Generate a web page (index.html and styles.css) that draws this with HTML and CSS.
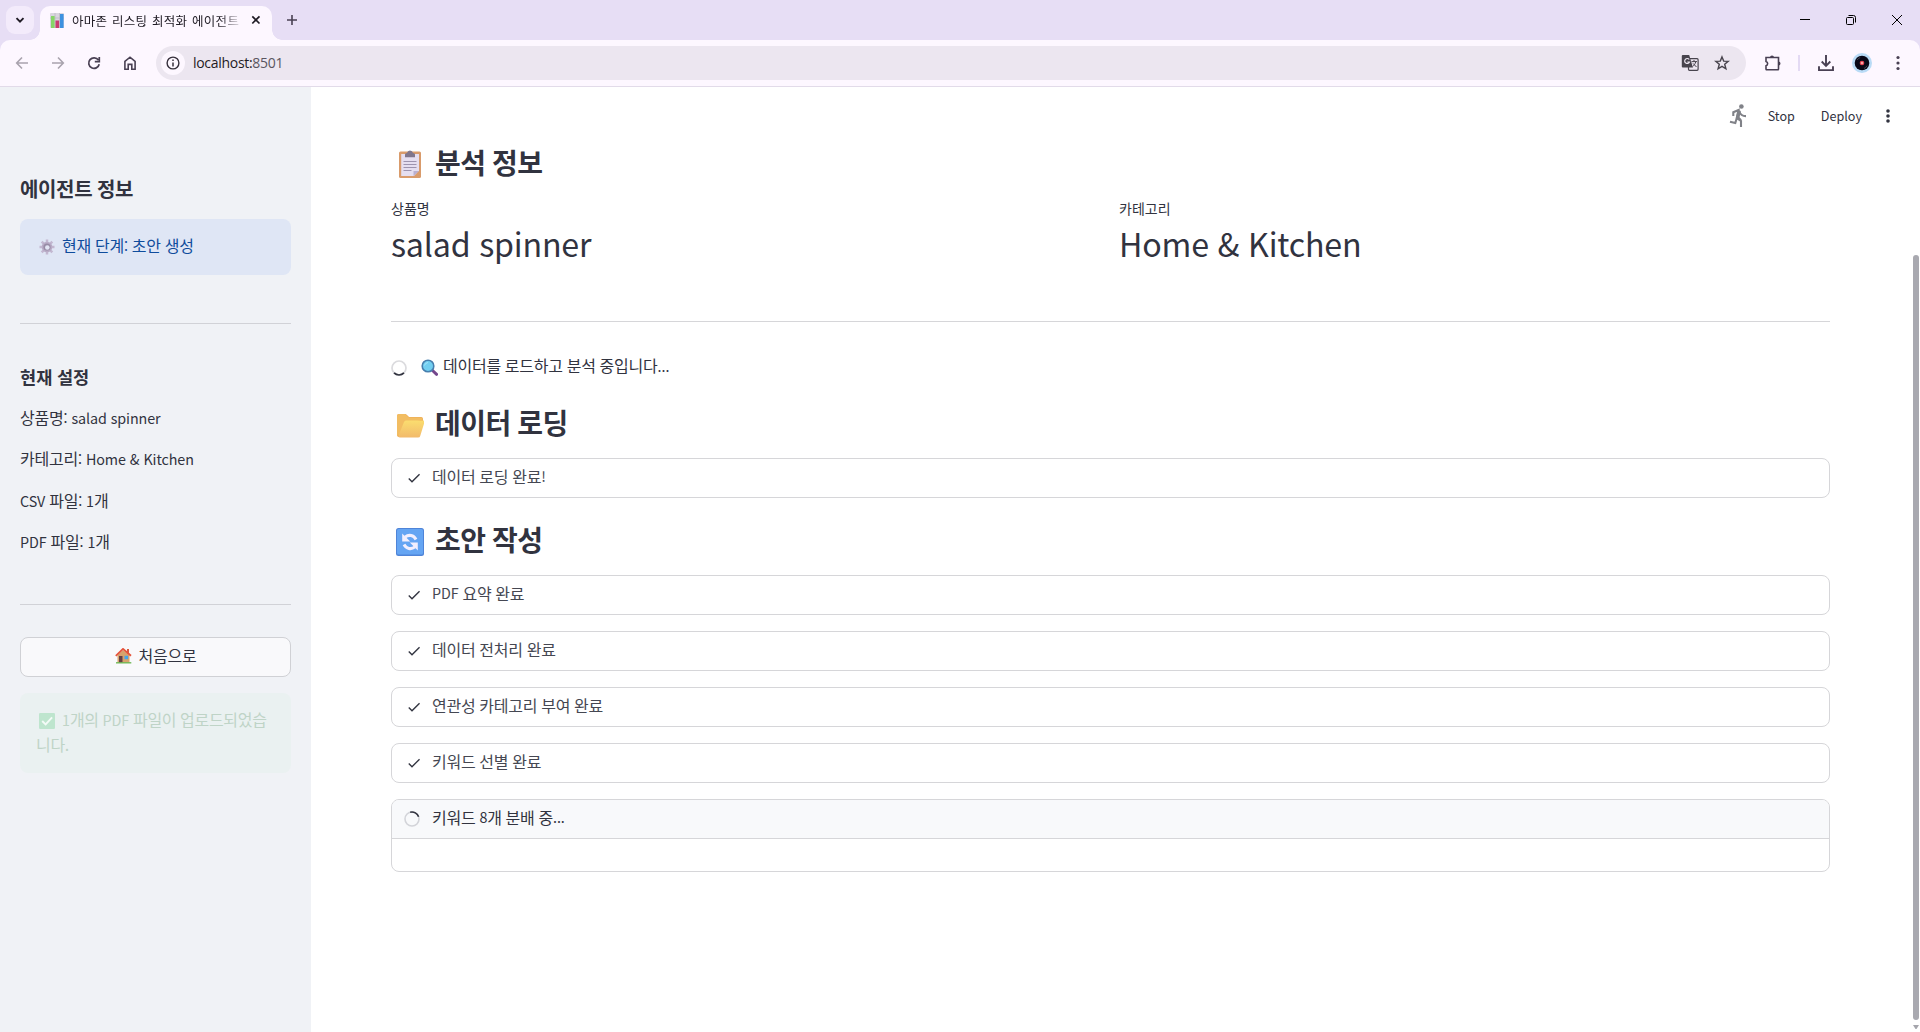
FILE: index.html
```html
<!DOCTYPE html>
<html lang="ko">
<head>
<meta charset="utf-8">
<title>아마존 리스팅 최적화 에이전트</title>
<link rel="stylesheet" href="styles.css">
</head>
<body>
<svg class="defs" aria-hidden="true">
  <symbol id="check" viewBox="0 0 24 24"><path d="M9 16.17 4.83 12l-1.42 1.41L9 19 21 7l-1.41-1.41z" fill="currentColor"/></symbol>
</svg>
<div class="browser">
  <header class="tabstrip">
    <button class="tabsearch"><svg width="14" height="14" viewBox="0 0 14 14"><path d="M3.5 5.2 7 8.7l3.5-3.5" fill="none" stroke="#1f1b24" stroke-width="1.9"/></svg></button>
    <div class="tab">
      <svg class="favicon" width="14" height="15" viewBox="0 0 14 15"><rect width="14" height="15" rx="1" fill="#d9d5df"/><path d="M5 0v15M9.5 0v15M0 5h14" stroke="#bcb7c5" stroke-width=".8"/><rect x="1" y="3" width="3.6" height="12" fill="#86d568"/><rect x="5.5" y="7.5" width="3.6" height="7.5" fill="#c83c70"/><rect x="10" y="1" width="3.6" height="14" fill="#3d91e0"/></svg>
      <span class="tab-title">아마존 리스팅 최적화 에이전트</span>
      <svg class="tab-close" width="10" height="10" viewBox="0 0 10 10"><path d="m1.3 1.3 7.2 7.2m0-7.2L1.3 8.5" stroke="#1f1b24" stroke-width="1.7"/></svg>
    </div>
    <svg class="newtab" width="12" height="12" viewBox="0 0 12 12"><path d="M6 1v10M1 6h10" stroke="#494053" stroke-width="1.6"/></svg>
    <div class="window-buttons">
      <svg width="12" height="12" viewBox="0 0 12 12"><path d="M1 5.5h10" stroke="#000"/></svg>
      <svg width="12" height="12" viewBox="0 0 12 12"><rect x="1.5" y="3.5" width="7" height="7" rx="1" fill="none" stroke="#000"/><path d="M3.5 1.5h5a2 2 0 0 1 2 2v5" fill="none" stroke="#000"/></svg>
      <svg width="12" height="12" viewBox="0 0 12 12"><path d="m1 1 10 10M11 1 1 11" stroke="#000"/></svg>
    </div>
  </header>
  <nav class="toolbar">
    <svg class="nav-icon" width="14" height="14" viewBox="0 0 14 14"><path d="M13 7H2M7 1.5 1.7 7 7 12.500" fill="none" stroke="#a9a3ae" stroke-width="1.6"/></svg>
    <svg class="nav-icon" width="14" height="14" viewBox="0 0 14 14"><path d="M1 7h11M7 1.500 12.300 7 7 12.500" fill="none" stroke="#a9a3ae" stroke-width="1.6"/></svg>
    <svg class="nav-icon" width="14" height="14" viewBox="0 0 14 14"><path d="M12.200 8.200A5.300 5.300 0 1 1 11.400 4.100M12.300 1v4.600H7.800" fill="none" stroke="#494053" stroke-width="1.700"/></svg>
    <svg class="nav-icon" width="14" height="14" viewBox="0 0 14 14"><path d="M1.900 13.200V5.400L7 1.200l5.100 4.200v7.800H8.800V8.400H5.200v4.800z" fill="none" stroke="#494053" stroke-width="1.600"/></svg>
    <div class="omnibox">
      <span class="site-info"><svg width="14" height="14" viewBox="0 0 14 14"><circle cx="7" cy="7" r="5.900" fill="none" stroke="#36303c" stroke-width="1.400"/><path d="M7 6.400v4M7 3.600v1.500" stroke="#36303c" stroke-width="1.500"/></svg></span>
      <span class="url"><b>localhost:</b>8501</span>
      <svg class="translate" width="18" height="18" viewBox="0 0 18 18"><rect x="7.500" y="4.700" width="9.600" height="11.600" rx="1" fill="none" stroke="#48444d" stroke-width="1.200"/><path d="M1.800 1h6.400l3.700 12.600H1.800a1 1 0 0 1-1-1V2a1 1 0 0 1 1-1z" fill="#48444d"/><path d="M8.200 5.500A2.500 2.500 0 1 0 8.500 8H6.300" fill="none" stroke="#ece6f0" stroke-width="1.200"/><path d="M10.500 7.600H16M13 6v1.600M14.800 7.700c-.7 2.500-1.700 3.600-3.300 5M12 9.400l3.500 3.600" fill="none" stroke="#48444d"/></svg>
      <svg class="star" width="16" height="16" viewBox="0 0 16 16"><path d="m8 1.900 1.700 4.200 4.500.3-3.500 2.900 1.200 4.500L8 11.400l-3.900 2.400 1.200-4.500-3.500-2.900 4.500-.3z" fill="none" stroke="#48444d" stroke-width="1.400"/></svg>
    </div>
    <svg class="puzzle" width="18" height="18" viewBox="0 0 18 18"><path d="M2 3.500h12.500v11.600a.7.700 0 0 1-.7.700H2.700a.7.700 0 0 1-.7-.7v-3.300a2.300 2.300 0 0 0 0-4.400z" fill="none" stroke="#494053" stroke-width="1.600"/><path d="M6 3.500a2 2 0 0 1 4 0zM14.500 7.500a2 2 0 0 1 0 4z" fill="#494053"/></svg>
    <i class="divider"></i>
    <svg class="download" width="18" height="18" viewBox="0 0 18 18"><path d="M9 1v10.500M4.700 7.500 9 11.800l4.300-4.300M2 12.200v3.900h14v-3.900" fill="none" stroke="#494053" stroke-width="1.900"/></svg>
    <svg class="avatar" width="20" height="20" viewBox="0 0 20 20"><circle cx="10" cy="10" r="10" fill="#b9dbf6"/><circle cx="10" cy="10" r="7.300" fill="#090817"/><path d="M5.200 7a6 6 0 0 1 3-2.500M12 15.500a6 6 0 0 0 3-2.800" stroke="#474654" fill="none"/><circle cx="10" cy="10" r="2.300" fill="#e74655"/><circle cx="10" cy="10" r=".9" fill="#ffd3cb"/></svg>
    <svg class="menu" width="4" height="16" viewBox="0 0 4 16"><g fill="#494053"><circle cx="2" cy="2.500" r="1.600"/><circle cx="2" cy="8" r="1.600"/><circle cx="2" cy="13.500" r="1.600"/></g></svg>
  </nav>
  <div class="app">
    <aside class="sidebar">
      <h2>에이전트 정보</h2>
      <div class="info"><svg class="emoji" width="16" height="16" viewBox="0 0 16 16"><g stroke="#c3b8d1" stroke-width="2.500"><path d="M8 .5v15M.5 8h15M2.700 2.700l10.600 10.600M13.300 2.700 2.700 13.300"/></g><circle cx="8" cy="8" r="5.300" fill="#b9acc6"/><circle cx="8" cy="8" r="3.600" fill="#978ba5"/><circle cx="8.300" cy="8.500" r="2.300" fill="#e2e4f3"/></svg><span>현재 단계<span class="latin">:</span> 초안 생성</span></div>
      <hr>
      <h3>현재 설정</h3>
      <p>상품명<span class="latin">: salad spinner</span></p>
      <p>카테고리<span class="latin">: Home &amp; Kitchen</span></p>
      <p><span class="latin">CSV </span>파일<span class="latin">: 1</span>개</p>
      <p><span class="latin">PDF </span>파일<span class="latin">: 1</span>개</p>
      <hr class="second">
      <button class="home"><svg width="17" height="16" viewBox="0 0 17 16"><path d="M12 1h2v5h-2z" fill="#d95a3c"/><path d="M2.500 7 8 2l6.500 5v8h-12z" fill="#d7a36d"/><path d="M.8 7.800 8 .9l8 6.900" fill="none" stroke="#e5543c" stroke-width="1.800"/><path d="M4 8h3.500v7H4z" fill="#654044"/><path d="M9.500 7.800h3.600v3.400H9.500z" fill="#43a5ed"/><path d="M1 14.800h15.300" stroke="#71b957" stroke-width="1.400"/></svg>처음으로</button>
      <div class="success"><svg width="16" height="16" viewBox="0 0 16 16"><rect width="16" height="16" rx="1.300" fill="#bee5ce"/><path d="m3.200 8 3.400 3.400 6.500-7" fill="none" stroke="#f4fbf7" stroke-width="1.900"/></svg><span class="latin">1</span>개의 <span class="latin">PDF </span>파일이 업로드되었습니다.</div>
    </aside>
    <main class="main">
      <div class="actions">
        <svg class="runner" width="20" height="24" viewBox="0 0 20 24"><circle cx="12.400" cy="2.500" r="2.300" fill="#808288"/><path d="M4.300 12V8.300L9.500 6l-1.700 8 4.200 3v6M10.300 7.500c1 3 3.200 4.600 6.700 4.600M7.800 14l-1.500 5-5.300-1.300" fill="none" stroke="#808288" stroke-width="2.100"/><path d="m9 5.600 2.800 1.300-1.200 6.300 2.100 2.200-1.200 1.800-4.800-3z" fill="#808288"/></svg>
        <span class="stop">Stop</span><span>Deploy</span>
        <svg class="kebab" width="4" height="14" viewBox="0 0 4 14"><g fill="#31333f"><circle cx="2" cy="2" r="1.800"/><circle cx="2" cy="7" r="1.800"/><circle cx="2" cy="12" r="1.800"/></g></svg>
      </div>
      <h1 class="first"><svg width="28" height="28" viewBox="0 0 28 28"><rect x="3" y="1.500" width="22" height="26.500" rx="1.500" fill="#d99b6b"/><path d="M5.200 4H23v16.500L18 26H5.200z" fill="#e5def0"/><path d="M17.500 26v-5H23z" fill="#b9afd0"/><path d="M7.500 11.500h13M7.500 14.500h13M7.500 17.500h13M7.500 20.500h8" stroke="#9d93ae"/><path d="M9 4.500Q9 3 11 3q.5-2.500 3-2.500T17 3q2 0 2 1.500v2.800H9z" fill="#80768c"/></svg>분석 정보</h1>
      <div class="metrics">
        <div><label>상품명</label><strong>salad spinner</strong></div>
        <div><label>카테고리</label><strong>Home &amp; Kitchen</strong></div>
      </div>
      <hr>
      <div class="loading"><svg class="spin" width="16" height="16" viewBox="0 0 16 16"><circle cx="8" cy="8" r="7" fill="none" stroke="#dbdbde" stroke-width="1.700"/><path d="M3.050 12.950a7 7 0 0 0 9.900 0" fill="none" stroke="#31333f" stroke-width="1.700"/></svg><svg class="magnifier" width="17" height="17" viewBox="0 0 17 17"><path d="m11 11 4.600 4.300" stroke="#74478c" stroke-width="3" stroke-linecap="round"/><circle cx="7" cy="7" r="5.800" fill="#72cff1" stroke="#477fae" stroke-width="1.600"/><path d="M3.500 6.500Q4 4 7 3.500" fill="none" stroke="#a5e5fa"/></svg>데이터를 로드하고 분석 중입니다<span class="latin">...</span></div>
      <h1 class="folder-title"><svg width="28" height="28" viewBox="0 0 28 28"><path d="M1 5q0-2 2-2h6q1 0 2 1l2 2h12q2 0 2 2v3L22 26H3q-2 0-2-2z" fill="#eda852"/><path d="M1 5q0-2 2-2h6l4 3.500h12q2 0 2 2L10 13 2 25q-1 0-1-2z" fill="#f2bd62"/><path d="M8 11q.6-1.500 2-1.500h17.500q1.500 0 1 1.500l-4.300 14Q24 26.500 22 26.500H4q-2 0-1.500-2z" fill="url(#folder)"/><defs><linearGradient id="folder" x1="0" x2="0" y1="0" y2="1"><stop stop-color="#fbdd6f"/><stop offset="1" stop-color="#f2ba6b"/></linearGradient></defs></svg>데이터 로딩</h1>
      <div class="status"><svg class="check"><use href="#check"/></svg>데이터 로딩 완료<span class="latin">!</span></div>
      <h1 class="draft-title"><svg width="28" height="28" viewBox="0 0 28 28"><rect width="28" height="28" rx="2.500" fill="#4f84d8"/><rect x="1" y="1" width="26" height="25.500" rx="1.500" fill="#65a5f3"/><path d="M9 9.200c4-3.200 8.700-2 11 2.300M19 18.800c-4 3.200-8.700 2-11-2.300" fill="none" stroke="#f2effe" stroke-width="3"/><path d="M6.200 5.500v8h8zM21.800 22.500v-8h-8z" fill="#f2effe"/></svg>초안 작성</h1>
      <div class="status-list">
        <div class="status"><svg class="check"><use href="#check"/></svg><span class="latin">PDF </span>요약 완료</div>
        <div class="status"><svg class="check"><use href="#check"/></svg>데이터 전처리 완료</div>
        <div class="status"><svg class="check"><use href="#check"/></svg>연관성 카테고리 부여 완료</div>
        <div class="status"><svg class="check"><use href="#check"/></svg>키워드 선별 완료</div>
        <div class="running"><div class="running-head"><svg class="spin" width="16" height="16" viewBox="0 0 16 16"><circle cx="8" cy="8" r="7" fill="none" stroke="#d3d4d9" stroke-width="1.600"/><path d="M6.200 1.230a7 7 0 0 1 8.400 4.600" fill="none" stroke="#31333f" stroke-width="1.600"/></svg>키워드 <span class="latin">8</span>개 분배 중<span class="latin">...</span></div></div>
      </div>
      <div class="scrollbar"><i class="thumb"></i><svg width="6" height="4" viewBox="0 0 6 4"><path d="M0 0h6L3.500 4h-1z" fill="#a5a5ac"/></svg></div>
    </main>
  </div>
</div>
</body>
</html>
```
FILE: styles.css
```css
* { box-sizing: border-box; }
body { margin: 0; overflow: hidden; font-family: "Noto Sans CJK KR", sans-serif; color: #31333f; }
svg { display: block; flex: none; }
button { font: inherit; color: inherit; border: 0; padding: 0; letter-spacing: inherit; }
.defs { position: absolute; width: 0; height: 0; }
.browser { width: 1920px; height: 1032px; display: flex; flex-direction: column; background: #e7def5; }

.tabstrip { height: 40px; flex: none; display: flex; align-items: flex-start; padding-left: 6px; }
.tabsearch { width: 28px; height: 28px; margin-top: 6px; border-radius: 9px; background: #f3ebfb; display: grid; place-items: center; }
.tab { position: relative; width: 232px; height: 34px; margin: 6px 0 0 6px; padding: 0 11px 6px 10px; display: flex; align-items: center; border-radius: 10px 10px 0 0; background: #fdf7ff; }
.tab::before, .tab::after { content: ""; position: absolute; bottom: 0; width: 10px; height: 10px; }
.tab::before { left: -10px; background: radial-gradient(circle at 0 0, transparent 9.5px, #fdf7ff 10px); }
.tab::after { right: -10px; background: radial-gradient(circle at 100% 0, transparent 9.5px, #fdf7ff 10px); }
.tab-title { width: 167px; margin: 1px 0 0 8px; overflow: hidden; white-space: nowrap; font-size: 12.5px; line-height: 18px; letter-spacing: .3px; word-spacing: .8px; color: #1f1b24; -webkit-mask-image: linear-gradient(90deg, #000 148px, transparent 172px); }
.tab-close { margin-left: auto; }
.newtab { margin: 14px 0 0 14px; }
.window-buttons { margin: 14px 17px 0 auto; display: flex; gap: 34px; }

.toolbar { height: 47px; flex: none; display: flex; align-items: center; padding: 0 20px 1px 15px; border-bottom: 1px solid #e2dbe9; border-radius: 10px 10px 0 0; background: #fdf7ff; }
.nav-icon { margin-right: 22px; }
.omnibox { width: 1590px; height: 34px; margin-left: -3px; padding: 0 16px 0 5px; display: flex; align-items: center; border-radius: 17px; background: #ece6f0; }
.site-info { width: 24px; height: 24px; display: grid; place-items: center; border-radius: 50%; background: #fdf7ff; }
.url { margin-left: 8px; font: 14px/20px "Open Sans", sans-serif; letter-spacing: -.3px; color: #5a5560; }
.url b { font-weight: 400; color: #1f1b24; }
.translate { margin-left: auto; }
.star { margin-left: 15px; }
.puzzle { margin-left: 18px; }
.divider { width: 2px; height: 16px; margin-left: 16px; background: #e4daf4; }
.download { margin-left: 17px; }
.avatar { margin-left: 17px; }
.menu { margin-left: auto; }

.app { flex: 1; min-height: 0; display: flex; background: #fff; }
.sidebar { width: 311px; flex: none; padding: 87px 20px 0; background: #f0f2f6; font-size: 16px; letter-spacing: -.2px; word-spacing: -.4px; }
.sidebar h2 { margin: 0; font-size: 20px; line-height: 30px; font-weight: 600; letter-spacing: -.35px; }
.sidebar h3 { margin: 37px 0 0; font-size: 17.6px; line-height: 32px; font-weight: 600; letter-spacing: 0; }
.sidebar p { height: 24px; margin: 0 0 17.4px; line-height: 24px; white-space: nowrap; }
.sidebar h3 + p { margin-top: 12px; }
.latin { font-size: 14.32px; letter-spacing: -.08px; word-spacing: 0; }
.info { height: 56px; margin-top: 15px; padding: 0 19px 5px; display: flex; align-items: center; gap: 7px; border-radius: 8px; background: #dfe6f5; color: #0f4c9c; }
.info .emoji { margin-top: 4px; }
hr { height: 1px; margin: 0; border: 0; background: #d1d2d7; }
.info + hr { margin-top: 48px; }
.sidebar .second { margin-top: 50.8px; }
.home { width: 271px; height: 40px; margin-top: 32px; display: flex; align-items: center; justify-content: center; gap: 6px; padding: 0 0 4px 1px; border: 1px solid #d0d1d5; border-radius: 8px; background: #f9f9fb; }
.home svg { margin-top: 2px; }
.success { height: 80px; margin-top: 16px; padding: 14px 16px; border-radius: 8px; background: #eaf1f1; color: #bfd4c7; line-height: 24px; word-break: break-all; letter-spacing: -.3px; }
.success svg { display: inline-block; margin: 0 7px 0 3px; vertical-align: -3px; }

.main { position: relative; flex: 1; padding: 59px 90px 0 80px; font-size: 16px; letter-spacing: -.22px; word-spacing: -.4px; }
.actions { position: absolute; top: 17px; right: 31px; display: flex; align-items: center; font-size: 12.6px; line-height: 24px; letter-spacing: 0; }
.runner { margin-right: 19px; }
.stop { margin-right: 26px; }
.kebab { margin-left: 24px; }
h1 { height: 36px; margin: 0; padding: 0 0 4px 5px; display: flex; align-items: center; gap: 11px; font-size: 28px; line-height: 32px; font-weight: 600; letter-spacing: -.5px; word-spacing: -.8px; }
h1 svg { margin-top: 6px; }
h1.first svg { margin-top: 3px; }
.metrics { width: 1440px; display: grid; grid-template-columns: 712px 712px; column-gap: 16px; margin-top: 14px; }
.metrics label { display: block; font-size: 14px; line-height: 24px; letter-spacing: 0; }
.metrics strong { display: block; font-size: 32.2px; line-height: 46px; font-weight: 400; letter-spacing: -.2px; word-spacing: 0; }
.main > hr { margin-top: 55px; background: #d6d6d9; }
.loading { height: 24px; margin-top: 33px; padding-bottom: 3px; display: flex; align-items: center; line-height: 21px; white-space: pre; }
.loading .spin { margin: 4px 15px 0 0; }
.magnifier { margin: 3px 5px 0 -1px; }
.folder-title { margin-top: 27px; }
.folder-title + .status { margin-top: 16px; }
.main > hr, .status, .running { width: 1439px; }
.status { height: 40px; padding: 0 15px 5px; display: flex; align-items: center; border: 1px solid #d6d6d9; border-radius: 8px; color: #454752; white-space: pre; }
.check { width: 16px; height: 16px; margin: 5px 10px 0 -1px; color: #31333f; }
.draft-title { margin-top: 25px; }
.status-list { margin-top: 16px; display: grid; gap: 16px; }
.running { height: 73px; border: 1px solid #d6d6d9; border-radius: 8px; overflow: hidden; }
.running-head { height: 39px; padding: 0 12px 5px; display: flex; align-items: center; border-bottom: 1px solid #d6d6d9; background: #f8f9fb; white-space: pre; }
.running .spin { margin: 5px 12px 0 0; }
.scrollbar { position: absolute; right: 2px; top: 168px; width: 6px; height: 774px; }
.thumb { display: block; width: 6px; height: 765px; margin-bottom: 5px; border-radius: 3px; background: #a9a9b0; }
```
